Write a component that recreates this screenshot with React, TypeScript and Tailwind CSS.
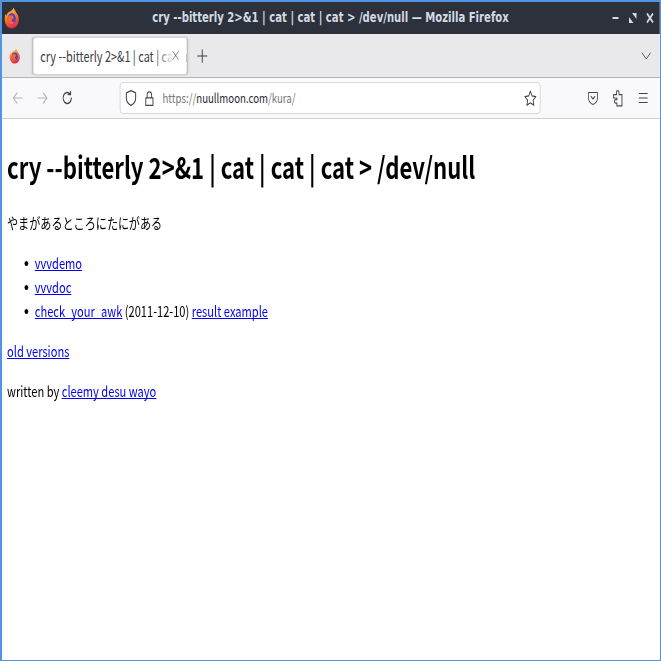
import React from "react";

const cjk = "font-['Noto_Sans_CJK_JP','Noto_Sans',sans-serif]";

function Fox({ size }: { size: number }) {
  return (
    <svg width={size} height={size} viewBox="0 0 20 20">
      <defs>
        <linearGradient id={`fx${size}`} x1="0.3" y1="0" x2="0.6" y2="1">
          <stop offset="0" stopColor="#ffd23a" />
          <stop offset="0.45" stopColor="#ff7a2b" />
          <stop offset="1" stopColor="#e3224f" />
        </linearGradient>
      </defs>
      <path d="M12.500 0.500c.3 2 2 2.800 3 4.800 1.500 1.500 3 3.200 3 6 0 4.800-3.800 8.200-8.500 8.200s-8.500-3.500-8.500-8.300c0-2.200.5-3.700 1.300-5.200.2 1 .5 1.500 1 2 .3-1.500 1.300-3 2.800-3.500 2.500-.8 4.800-2 5.900-4z" fill={`url(#fx${size})`} />
      <circle cx="10" cy="10.500" r="5" fill="#5b3fc4" />
      <path d="M5.200 9c1.500-1.500 4.300-2 5.800-1 1 .6 1.500 1.500 1 2.200-1 .3-2 .8-2 1.800 0 1.200 1.500 2 3.300 1.500-1 1.500-2.800 2.300-4.300 2-2.800-.5-4.300-3.700-3.800-6.500z" fill="#f46a2c" />
    </svg>
  );
}

function Line({ d, size = 16, w = 1.2 }: { d: string; size?: number; w?: number }) {
  return (
    <svg width={size} height={size} viewBox="0 0 16 16" fill="none" stroke="currentColor" strokeWidth={w} strokeLinecap="round" strokeLinejoin="round">
      <path d={d} />
    </svg>
  );
}

const link = "text-[#0000ee] underline [text-decoration-skip-ink:none]";
const item = "relative before:content-[''] before:absolute before:left-[-14px] before:top-[10px] before:w-[5.500px] before:h-[5px] before:rounded-full before:bg-black";

export default function App() {
  return (
    <div className="w-[661px] h-[661px] border-t-2 border-l-2 border-r border-b border-[#5294e2] bg-white overflow-hidden">
      <div className={`w-[877px] h-full flex flex-col origin-top-left scale-x-75 ${cjk}`}>
        {/* title bar */}
        <div className="h-[32px] shrink-0 bg-[#2d313c] flex items-center text-[#d3dae3] pl-[2px] pr-[7px]">
          <Fox size={22} />
          <div className="flex-1 text-center text-[13.450px] font-bold font-['DejaVu_Sans',sans-serif] pl-[40px]">
            cry --bitterly 2&gt;&amp;1 | cat | cat | cat &gt; /dev/null — Mozilla Firefox
          </div>
          <div className="flex items-center gap-[11px]">
            <svg width="12" height="12" viewBox="0 0 12 12"><rect x="2" y="5" width="8" height="2" fill="#d3dae3" /></svg>
            <svg width="12" height="12" viewBox="0 0 12 12" fill="#d3dae3"><path d="M5 1h6v6zM1 5l6 6H1z" /></svg>
            <svg width="12" height="12" viewBox="0 0 12 12" stroke="#d3dae3" strokeWidth="2"><path d="M2 1.500l8 9M10 1.500l-8 9" /></svg>
          </div>
        </div>
        {/* tab bar */}
        <div className="h-[44px] shrink-0 bg-[#e9e9eb] border-b border-[#b4b4b6] flex items-center text-[#2b2a33]">
          <div className="w-[41px] flex justify-center pr-[7px]"><Fox size={16} /></div>
          <div className="w-[206px] h-[38px] mt-[1px] bg-white rounded-[4px] border border-[#d4d4d6] shadow-[0_0_2px_rgba(0,0,0,0.25)] flex items-center pl-[9px] relative overflow-hidden">
            <span className="text-[14.500px] whitespace-nowrap text-[#3c3b42]">cry --bitterly 2&gt;&amp;1 | cat | cat | cat</span>
            <div className="absolute right-0 top-0 bottom-0 w-[41px] bg-gradient-to-r from-transparent to-white to-[60%]" />
            <span className="absolute right-[8px] top-[11px] text-[#4a4a50]"><Line size={13} d="M3.500 3l9 10M12.500 3l-9 10" w={0.9} /></span>
          </div>
          <span className="ml-[11px] text-[#3a3a40]"><Line size={18} d="M8 2.500v11M2.500 8h11" w={1.1} /></span>
          <div className="flex-1" />
          <span className="mr-[10px] text-[#4a4a50]"><Line size={16} d="M2.500 5l5.500 6 5.500-6" w={1} /></span>
        </div>
        {/* nav bar */}
        <div className="h-[41px] shrink-0 bg-[#f9f9fb] border-b border-[#cfcfd1] flex items-center text-[#45454d]">
          <span className="ml-[13px] text-[#b4b4ba]"><Line d="M14 8H2M7 3L2 8l5 5" /></span>
          <span className="ml-[17px] text-[#b4b4ba]"><Line d="M2 8h12M9 3l5 5-5 5" /></span>
          <span className="ml-[17px]"><Line d="M13.500 8a5.500 5.500 0 1 1-1.600-3.900M12.500 1.500v3h-3.300" w={1.4} /></span>
          <div className="ml-[62px] w-[561px] h-[32px] bg-white rounded-[4px] border border-[#d3d3d6] flex items-center shrink-0">
            <span className="ml-[5px]"><Line size={18} d="M8 1.500l5.500 2V8c0 3-2.400 5.300-5.500 6.500C4.900 13.300 2.500 11 2.500 8V3.500z" w={1.2} /></span>
            <span className="ml-[7px]"><Line size={17} d="M3.500 7.500h9V14.500h-9zM5.200 7.500V4.500a2.800 2.800 0 0 1 5.600 0v3" w={1.2} /></span>
            <span className="ml-[9px] text-[12.900px] whitespace-nowrap text-[#77777d]">
              https://<span className="text-[#2b2a33]">nuullmoon.com</span>/kura/
            </span>
            <div className="flex-1" />
            <span className="mr-[3px] text-[#3c3c44]"><Line size={19} d="M8 1.800l1.900 4 4.300.6-3.100 3 .8 4.300L8 11.600l-3.900 2.100.8-4.300-3.100-3 4.300-.6z" w={1} /></span>
          </div>
          <span className="ml-[62px]"><Line d="M2 2.500h12v5.500c0 3.300-2.800 5.500-6 6.500-3.200-1-6-3.200-6-6.500zM5.500 6.500L8 9l2.500-2.500" w={1.1} /></span>
          <span className="ml-[16px]"><Line size={18} d="M3 5h3.500V3a1.500 1.500 0 0 1 3 0v2H13v10H7v-2.500H5.500a1.500 1.500 0 0 1 0-3H7V8H3z" w={1.1} /></span>
          <span className="ml-[17px]"><Line d="M2.500 3.500h11M2.500 8h11M2.500 12.500h11" w={1.1} /></span>
        </div>
        {/* page */}
        <div className="flex-1 pl-[6.700px] text-black text-[14.800px] leading-[24px]">
          <h1 className="text-[29.500px] font-bold leading-[42px] mt-[26px] mb-[24px] whitespace-nowrap">
            cry --bitterly 2&gt;&amp;1 | cat | cat | cat &gt; /dev/null
          </h1>
          <p className="mb-[16px]">やまがあるところにたにがある</p>
          <ul className="list-none pl-[37px] mb-[16px]">
            <li className={item}><a href="#a" className={link}>vvvdemo</a></li>
            <li className={item}><a href="#b" className={link}>vvvdoc</a></li>
            <li className={item}>
              <a href="#c" className={link}>check_your_awk</a> (2011-12-10){" "}
              <a href="#d" className={link}>result example</a>
            </li>
          </ul>
          <p className="mb-[16px]"><a href="#e" className={link}>old versions</a></p>
          <p>written by <a href="#f" className={link}>cleemy desu wayo</a></p>
        </div>
      </div>
    </div>
  );
}
